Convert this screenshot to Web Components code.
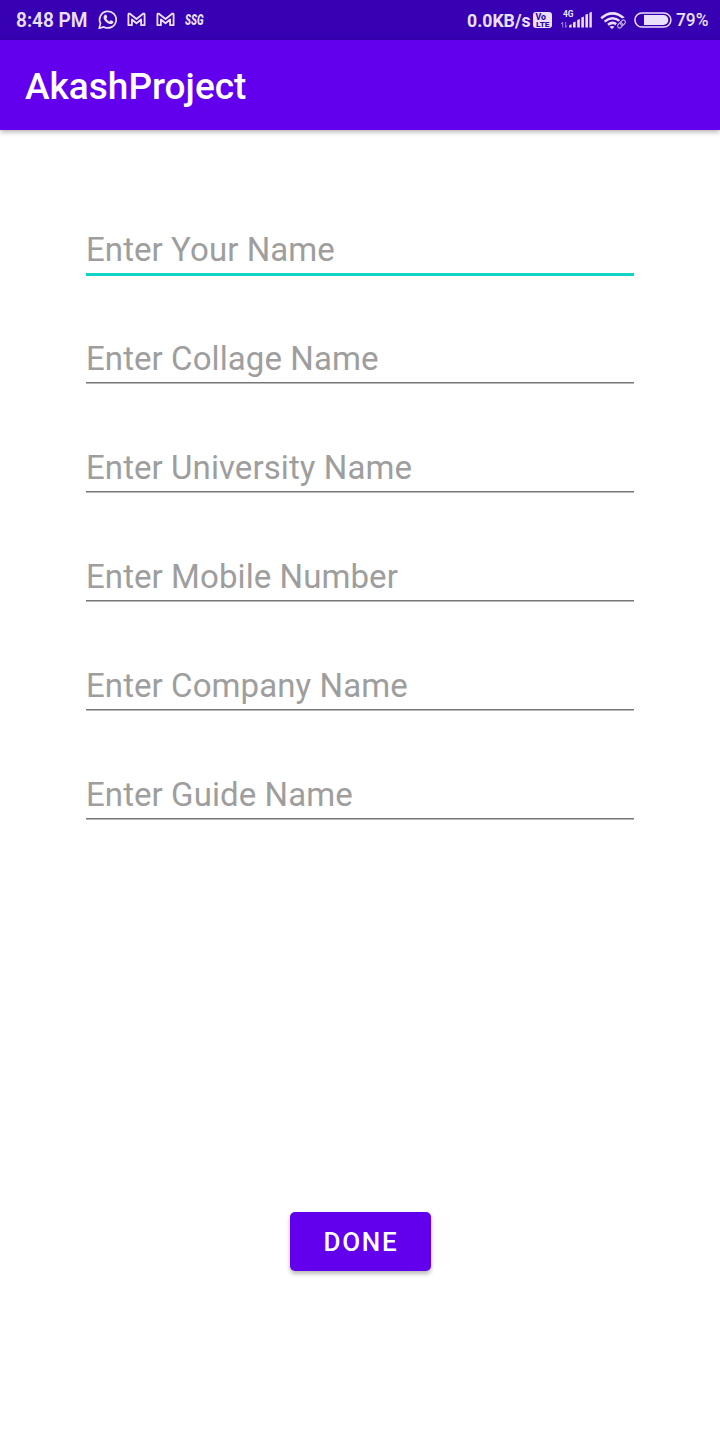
<!DOCTYPE html>
<html lang="en"><head><meta charset="utf-8"><title>AkashProject</title>
<style>html,body{margin:0;height:100%;background:#fff;font-family:Roboto,sans-serif}</style></head>
<body><app-screen></app-screen>
<script>
const define=(name,html)=>customElements.define(name,class extends HTMLElement{
 constructor(){super();const t=document.createElement('template');t.innerHTML=html;
 this.attachShadow({mode:'open'}).append(t.content.cloneNode(true));}
});
define('status-bar',`<style>
:host{display:flex;height:40px;background:#3700b3;color:#ebe0fa;box-sizing:border-box;padding-left:16px;justify-content:space-between}
svg{display:block;height:40px;flex:none;overflow:visible}
.g{display:flex}
text{fill:#ebe0fa;font-family:Roboto,sans-serif}
</style>
<div class="g">
<svg width="80" viewBox="0 0 80 40"><text x="0" y="27" font-size="19.500" font-weight="600" textLength="71.500" lengthAdjust="spacingAndGlyphs">8:48 PM</text></svg>
<svg width="30" viewBox="96 0 30 40"><path d="M99.200 28.300l1.300-4.900a8.300 8.300 0 1 1 3.400 3.500z" fill="none" stroke="#ebe0fa" stroke-width="1.700" stroke-linejoin="round"/><path d="M104.700 14.900c.7-.6 1.400-.5 1.700.2l.7 1.600c.2.6-.1 1-.8 1.800.7 1.400 1.800 2.400 3.300 3 .9-1.100 1.200-1.400 1.800-1.100l1.700.9c.6.4.4 1.300-.2 2-1.900 1.600-4.400.7-6.700-1.300-2.500-2.400-3.600-5.100-1.500-7.100z" fill="#ebe0fa"/></svg>
<svg width="29" viewBox="126 0 29 40"><path d="M128.400 25.200V14.600q0-1.500 1.500-.9l6.600 5.300 6.600-5.300q1.500-.6 1.500.9v10.600h-3.500v-5.700l-4.600 3.700-4.600-3.700v5.700z" fill="none" stroke="#ebe0fa" stroke-width="1.800" stroke-linejoin="round"/></svg>
<svg width="29" viewBox="126 0 29 40"><path d="M128.400 25.200V14.600q0-1.500 1.500-.9l6.600 5.300 6.600-5.300q1.500-.6 1.500.9v10.600h-3.500v-5.700l-4.600 3.700-4.600-3.700v5.700z" fill="none" stroke="#ebe0fa" stroke-width="1.800" stroke-linejoin="round"/></svg>
<svg width="60" viewBox="184 0 60 40"><text x="185" y="25.200" font-size="15.500" font-weight="900" font-style="italic" textLength="18.500" lengthAdjust="spacingAndGlyphs">SSG</text></svg>
</div>
<div class="g">
<svg width="66" viewBox="466 0 66 40"><text x="467" y="27" font-size="18.500" font-weight="700" textLength="63.500" lengthAdjust="spacingAndGlyphs">0.0KB/s</text></svg>
<svg width="24" viewBox="532 0 24 40"><rect x="533" y="12" width="19" height="16" rx="3" fill="#ebe0fa"/><text x="535.500" y="19.600" font-size="8.500" font-weight="800" style="fill:#3700b3" textLength="10.500" lengthAdjust="spacingAndGlyphs">Vo</text><text x="536" y="26.600" font-size="8" font-weight="800" style="fill:#3700b3" textLength="13.500" lengthAdjust="spacingAndGlyphs">LTE</text></svg>
<svg width="42" viewBox="556 0 42 40"><text x="563" y="17" font-size="8.500" font-weight="700" textLength="10.500" lengthAdjust="spacingAndGlyphs">4G</text><g fill="#ebe0fa"><path d="M569 27.500v-2l2.600-1.500v3.500zM573 27.500v-5l2.600-1v6zM577.200 27.500v-7.400l2.600-1v8.400zM581.300 27.500v-10.100l2.600-1v11.100zM585.400 27.500v-12.700l2.600-1v13.700zM589.400 27.500v-14.700l2.400-1v15.700z"/></g><path d="M562.700 27.500v-5.500l-1.500 2M565.600 22v5.500l1.500-2" fill="none" stroke="#9d80da" stroke-width="1"/></svg>
<svg width="34" viewBox="598 0 34 40"><g fill="none" stroke="#ebe0fa" stroke-width="2.500"><path d="M601.200 18.200q11.300-9.600 22.600 0M604.600 21.600q7.900-6.700 15.800 0M608 24.700q4.500-3.500 8.700-.2"/></g><path d="M609.500 26.800q2.500-1.700 5 0l-2.500 2.200z" fill="#ebe0fa"/><g transform="rotate(-45 621.500 24)" fill="none" stroke="#3700b3" stroke-width="3.500"><rect x="616.800" y="22" width="5.500" height="4" rx="2"/><rect x="620.700" y="22" width="5.500" height="4" rx="2"/></g><g transform="rotate(-45 621.500 24)" fill="none" stroke="#c3aeea" stroke-width="1.200"><rect x="616.800" y="22" width="5.500" height="4" rx="2"/><rect x="620.700" y="22" width="5.500" height="4" rx="2"/></g></svg>
<svg width="42" viewBox="632 0 42 40"><rect x="634.900" y="12.900" width="36" height="14.200" rx="7.100" fill="none" stroke="#ebe0fa" stroke-width="1.500"/><path d="M644 15h19.300a5 5 0 0 1 0 10H644z" fill="#ebe0fa"/></svg>
<svg width="46" viewBox="674 0 46 40"><text x="676" y="26.200" font-size="18.500" font-weight="500" textLength="32.500" lengthAdjust="spacingAndGlyphs">79%</text></svg>
</div>`);
define('app-bar',`<style>
:host{display:flex;align-items:center;height:90px;box-sizing:border-box;padding:3px 0 0 25px;background:#6200ee;color:#fff;font-size:37px;font-weight:500;line-height:44px;box-shadow:0 2px 5px rgba(0,0,0,.3)}
</style><slot></slot>`);
define('text-entry',`<style>
:host{display:block;box-sizing:border-box;height:109px;color:#9e9e9e;font-size:33px;line-height:44px;letter-spacing:.08px;white-space:nowrap}
.line{height:2px;margin-top:1px;background:linear-gradient(#777 50%,#b9b9b9 50%)}
:host([focused]) .line{height:3px;background:#12d4c5}
</style><slot></slot><div class="line"></div>`);
define('raised-button',`<style>
:host{display:flex;align-items:center;justify-content:center;width:141px;height:59px;box-sizing:border-box;padding:1px 0 0 1px;border-radius:5px;background:#6200ee;color:#fff;font-size:26px;font-weight:500;letter-spacing:1.800px;box-shadow:0 3px 4px rgba(0,0,0,.27)}
</style><slot></slot>`);
define('app-screen',`<style>
:host{display:flex;flex-direction:column;height:1440px;background:#fff}
main{display:flex;flex-direction:column;padding:98px 86px 0}
raised-button{align-self:center;margin-top:330px;margin-left:1px}
</style>
<status-bar></status-bar><app-bar>AkashProject</app-bar>
<main>
<text-entry focused>Enter Your Name</text-entry><text-entry>Enter Collage Name</text-entry><text-entry>Enter University Name</text-entry><text-entry>Enter Mobile Number</text-entry><text-entry>Enter Company Name</text-entry><text-entry>Enter Guide Name</text-entry>
<raised-button>DONE</raised-button>
</main>`);
</script></body></html>
